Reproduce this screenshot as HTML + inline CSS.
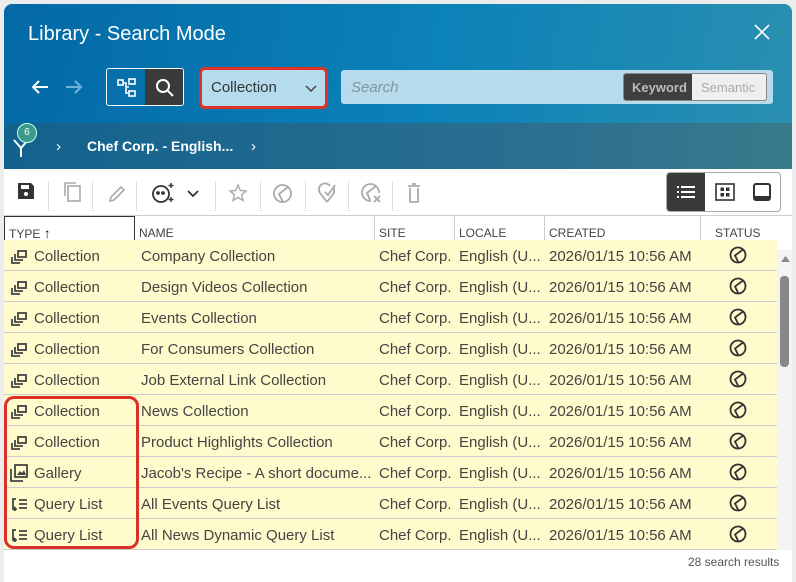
<!DOCTYPE html>
<html><head><meta charset="utf-8"><style>
*{box-sizing:border-box;margin:0;padding:0}
body{width:796px;height:582px;background:#ececec;font-family:"Liberation Sans",sans-serif;position:relative;overflow:hidden}
.dlg{position:absolute;left:4px;top:4px;width:788px;height:578px;background:#fff;border-radius:8px 8px 0 0;overflow:hidden}
.hdr{position:absolute;left:0;top:0;width:788px;height:119px;background:linear-gradient(100deg,#0369a6 0%,#0b82b8 55%,#2a8fb0 100%)}
.crumb{position:absolute;left:0;top:119px;width:788px;height:46px;background:linear-gradient(90deg,#12628e,#2c7090 70%,#3a7a8c)}
.t{position:absolute;white-space:nowrap}
.row{position:absolute;left:0;width:773px;height:31px;background:#fffbcc;border-bottom:1px solid #ccc;font-size:15px;color:#444}
.row span{position:absolute;top:8px;white-space:nowrap}
.th{position:absolute;top:212px;height:34px;font-size:12px;color:#444;border-right:1px solid #ccc;padding:10px 0 0 4px}
.tb{position:absolute;top:178px;color:#aaa}
</style></head><body>
<div class="dlg">
<div class="hdr"></div>
<div class="t" style="left:24px;top:19px;font-size:20px;color:#fff">Library - Search Mode</div>
<svg class="t" style="left:750px;top:20px" width="16" height="16" viewBox="0 0 16 16"><path d="M1 1L15 15M15 1L1 15" stroke="#fff" stroke-width="1.6"/></svg>
<svg class="t" style="left:27px;top:75px" width="18" height="16" viewBox="0 0 18 16"><path d="M17 8H2M8 2L2 8L8 14" stroke="#fff" stroke-width="2" fill="none"/></svg>
<svg class="t" style="left:61px;top:75px" width="18" height="16" viewBox="0 0 18 16"><path d="M1 8H16M10 2L16 8L10 14" stroke="#6fb3d8" stroke-width="2" fill="none"/></svg>
<div class="t" style="left:102px;top:64px;width:78px;height:38px;border:1px solid #fff;border-radius:3px;overflow:hidden">
<div style="position:absolute;left:38px;top:0;width:40px;height:38px;background:#3a3a3a"></div>
<svg style="position:absolute;left:10px;top:9px" width="20" height="20" viewBox="0 0 20 20" fill="none" stroke="#fff" stroke-width="1.6"><rect x="1" y="2" width="5" height="5"/><rect x="12" y="1" width="6" height="5"/><rect x="12" y="13" width="6" height="5"/><path d="M6 5H9V15H12M9 9H12"/></svg>
<svg style="position:absolute;left:48px;top:9px" width="20" height="20" viewBox="0 0 20 20" fill="none" stroke="#fff" stroke-width="2"><circle cx="8" cy="8" r="6"/><path d="M12.5 12.5L18 18"/></svg>
</div>
<div class="t" style="left:195px;top:63px;width:129px;height:42px;border:3px solid #e03028;border-radius:6px;background:#b5dced"></div>
<div class="t" style="left:207px;top:75px;font-size:15px;color:#333">Collection</div>
<svg class="t" style="left:301px;top:81px" width="12" height="8" viewBox="0 0 12 8"><path d="M1 1L6 6L11 1" stroke="#444" stroke-width="1.5" fill="none"/></svg>
<div class="t" style="left:337px;top:66px;width:432px;height:34px;background:#b7dbea;border-radius:3px"></div>
<div class="t" style="left:347px;top:75px;font-size:15px;color:#7a95a5;font-style:italic">Search</div>
<div class="t" style="left:619px;top:69px;width:144px;height:28px;border:1px solid #888;border-radius:3px;overflow:hidden;background:#efefef">
<div style="position:absolute;left:0;top:0;width:68px;height:28px;background:#3f3f3f;color:#bbb;font-size:13px;font-weight:bold;padding:6px 0 0 8px">Keyword</div>
<div style="position:absolute;left:77px;top:6px;color:#aaa;font-size:13px">Semantic</div>
</div>
<div class="crumb"></div>
<svg class="t" style="left:8px;top:132px" width="18" height="22" viewBox="0 0 18 22"><path d="M2 4L9 12L16 4M9 12V21" stroke="#fff" stroke-width="2" fill="none"/></svg>
<div class="t" style="left:13px;top:119px;width:20px;height:20px;border-radius:50%;background:#3b9a8a;border:1px solid #cfe;color:#fff;font-size:10px;text-align:center;line-height:18px">6</div>
<div class="t" style="left:52px;top:134px;color:#fff;font-size:15px">›</div>
<div class="t" style="left:83px;top:134px;color:#fff;font-size:14px;font-weight:bold">Chef Corp. - English...</div>
<div class="t" style="left:247px;top:134px;color:#fff;font-size:15px">›</div>
<!-- toolbar -->
<svg class="tb" style="left:13px;top:178px" width="18" height="18" viewBox="0 0 18 18"><path d="M1 1H14L17 4V17H1Z" fill="#333"/><rect x="4" y="3" width="8" height="4" fill="#fff"/><circle cx="9" cy="12" r="2" fill="#fff"/></svg>
<svg class="tb" style="left:58px;top:177px" width="22" height="22" viewBox="0 0 22 22" fill="none" stroke="#aaa" stroke-width="1.6"><path d="M3 15V2H14"/><rect x="6" y="5" width="12" height="15"/></svg>
<svg class="tb" style="left:103px;top:180px" width="20" height="20" viewBox="0 0 20 20" fill="none" stroke="#aaa" stroke-width="1.6"><path d="M3 17L4 13L14 3L17 6L7 16Z"/></svg>
<svg class="tb" style="left:146px;top:178px" width="26" height="22" viewBox="0 0 26 22" fill="none" stroke="#333" stroke-width="1.8"><circle cx="11" cy="12" r="8"/><circle cx="8" cy="11" r="1" fill="#333"/><circle cx="13" cy="11" r="1" fill="#333"/><path d="M21 1V6M18.5 3.5H23.5M21 15V20M18.5 17.5H23.5" stroke-width="1.4"/></svg>
<svg class="tb" style="left:183px;top:186px" width="12" height="8" viewBox="0 0 12 8"><path d="M1 1L6 6L11 1" stroke="#333" stroke-width="1.8" fill="none"/></svg>
<svg class="tb" style="left:224px;top:179px" width="20" height="20" viewBox="0 0 20 20"><path d="M10 2L12.3 7.5L18 8L13.6 11.8L15 17.5L10 14.5L5 17.5L6.4 11.8L2 8L7.7 7.5Z" fill="none" stroke="#aaa" stroke-width="1.4"/></svg>
<svg class="tb" style="left:268px;top:179px" width="21" height="21" viewBox="0 0 21 21" fill="none" stroke="#aaa" stroke-width="1.8"><circle cx="10.5" cy="10.5" r="8.5"/><path d="M16 4L7 11L11 19"/></svg>
<svg class="tb" style="left:313px;top:178px" width="20" height="22" viewBox="0 0 20 22" fill="none" stroke="#aaa" stroke-width="1.8"><path d="M10 20L3 11A6 6 0 0 1 13 4"/><path d="M10 20L17 11V5M8 10L11 13L18 3"/></svg>
<svg class="tb" style="left:356px;top:178px" width="22" height="22" viewBox="0 0 22 22" fill="none" stroke="#aaa" stroke-width="1.8"><path d="M11 19A8.5 8.5 0 1 1 19 11"/><path d="M16 4L7 11L10 18M14 14L20 20M20 14L14 20"/></svg>
<svg class="tb" style="left:403px;top:179px" width="14" height="20" viewBox="0 0 14 20" fill="none" stroke="#aaa" stroke-width="1.8"><path d="M1 3H13M5 1H9M3 5V19H11V5"/></svg>
<div class="t" style="left:132px;top:177px;width:1px;height:30px;background:#ddd"></div>
<div class="t" style="left:88px;top:177px;width:1px;height:30px;background:#ddd"></div>
<div class="t" style="left:44px;top:177px;width:1px;height:30px;background:#ddd"></div>
<div class="t" style="left:211px;top:177px;width:1px;height:30px;background:#ddd"></div>
<div class="t" style="left:256px;top:177px;width:1px;height:30px;background:#ddd"></div>
<div class="t" style="left:301px;top:177px;width:1px;height:30px;background:#ddd"></div>
<div class="t" style="left:344px;top:177px;width:1px;height:30px;background:#ddd"></div>
<div class="t" style="left:388px;top:177px;width:1px;height:30px;background:#ddd"></div>
<div class="t" style="left:662px;top:168px;width:115px;height:40px;border:1px solid #aaa;border-radius:4px;overflow:hidden">
<div style="position:absolute;left:0;top:0;width:38px;height:40px;background:#3a3a3a"></div>
<svg style="position:absolute;left:10px;top:13px" width="18" height="13" viewBox="0 0 18 13" fill="#fff"><rect x="0" y="0" width="2" height="2"/><rect x="4" y="0" width="14" height="2"/><rect x="0" y="5" width="2" height="2"/><rect x="4" y="5" width="14" height="2"/><rect x="0" y="10" width="2" height="2"/><rect x="4" y="10" width="14" height="2"/></svg>
<svg style="position:absolute;left:48px;top:10px" width="20" height="18" viewBox="0 0 20 18" fill="none" stroke="#333" stroke-width="1.6"><rect x="1" y="1" width="18" height="16"/><rect x="5.5" y="4.5" width="3.5" height="3.5" fill="#333" stroke="none"/><rect x="11" y="4.5" width="3.5" height="3.5" fill="#333" stroke="none"/><rect x="5.5" y="10" width="3.5" height="3.5" fill="#333" stroke="none"/><rect x="11" y="10" width="3.5" height="3.5" fill="#333" stroke="none"/></svg>
<svg style="position:absolute;left:86px;top:10px" width="18" height="18" viewBox="0 0 18 18"><rect x="1" y="1" width="16" height="16" rx="2" fill="none" stroke="#333" stroke-width="2"/><rect x="1" y="13" width="16" height="4" fill="#333"/></svg>
</div>
<!-- table header -->
<div style="position:absolute;left:0;top:211px;width:788px;height:35px;border-top:1px solid #ccc;background:#fff"></div>
<div class="th" style="left:0;width:131px;border:1px solid #333;top:212px;height:33px;padding-top:8px">TYPE <b style="font-size:14px;color:#222">↑</b></div>
<div class="th" style="left:131px;width:240px">NAME</div>
<div class="th" style="left:371px;width:80px">SITE</div>
<div class="th" style="left:451px;width:90px">LOCALE</div>
<div class="th" style="left:541px;width:156px">CREATED</div>
<div class="th" style="left:697px;width:76px;border:none;padding-left:14px">STATUS</div>
<div id="rows"></div>
<div class="t" style="left:773px;top:246px;width:15px;height:300px;background:#f4f4f4"></div>
<svg class="t" style="left:777px;top:252px" width="9" height="6" viewBox="0 0 9 6"><path d="M0 6L4.5 0L9 6Z" fill="#888"/></svg>
<div class="t" style="left:776px;top:272px;width:9px;height:91px;background:#888;border-radius:4px"></div>
<div class="t" style="left:684px;top:551px;font-size:12px;color:#555">28 search results</div>
<div class="t" style="left:0px;top:392px;width:135px;height:153px;border:3px solid #d9302a;border-radius:10px"></div>
</div>
<script>
var d=[["c","Collection","Company Collection"],["c","Collection","Design Videos Collection"],["c","Collection","Events Collection"],["c","Collection","For Consumers Collection"],["c","Collection","Job External Link Collection"],["c","Collection","News Collection"],["c","Collection","Product Highlights Collection"],["g","Gallery","Jacob's Recipe - A short docume..."],["q","Query List","All Events Query List"],["q","Query List","All News Dynamic Query List"]];
var ic={c:'<svg width="18" height="16" viewBox="0 0 18 16" fill="none" stroke="#444" stroke-width="1.8"><rect x="8" y="2" width="8" height="6"/><path d="M5 5V11H13M2 8V14H10"/></svg>',
g:'<svg width="18" height="18" viewBox="0 0 18 18" fill="none" stroke="#444" stroke-width="1.8"><rect x="5" y="1" width="12" height="12"/><path d="M1 5V17H13"/><path d="M7 11L10 7L12 9L14 6L16 11Z" fill="#444" stroke="none"/></svg>',
q:'<svg width="18" height="14" viewBox="0 0 18 14" fill="none" stroke="#444" stroke-width="1.8"><path d="M6 2H3V12H6M4 10L6 12L4 14M9 3H17M9 7H17M9 11H17"/></svg>'};
var h='';for(var i=0;i<d.length;i++){var y=236+i*31;
h+='<div class="row" style="top:'+y+'px"><span style="left:6px;top:'+(d[i][0]=="g"?7:9)+'px">'+ic[d[i][0]]+'</span><span style="left:30px">'+d[i][1]+'</span><span style="left:137px">'+d[i][2]+'</span><span style="left:375px">Chef Corp.</span><span style="left:455px">English (U...</span><span style="left:545px">2026/01/15 10:56 AM</span><span style="left:725px;top:6px"><svg width="18" height="18" viewBox="0 0 18 18" fill="none" stroke="#333" stroke-width="1.8"><circle cx="9" cy="9" r="7.5"/><path d="M14 3.5L6 9.5L9.5 16.5"/></svg></span></div>';}
document.getElementById('rows').innerHTML=h;
</script>
</body></html>
